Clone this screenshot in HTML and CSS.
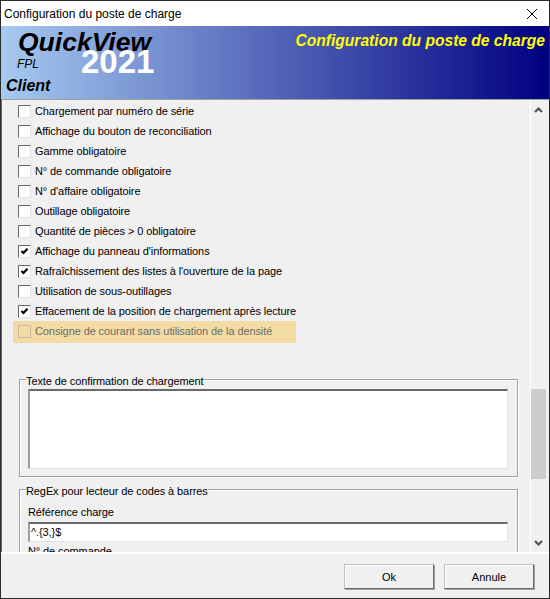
FILE: index.html
```html
<!DOCTYPE html>
<html lang="fr">
<head>
    <meta charset="UTF-8">
    <meta name="viewport" content="width=device-width, initial-scale=1.0">
    <title>Configuration du poste de charge</title>
    <link rel="stylesheet" href="styles.css">
</head>
<body>
    <div class="window">
        <div class="titlebar">
            <span class="title">Configuration du poste de charge</span>
            <svg class="close" width="10" height="10" viewBox="0 0 10 10"><path d="M0 0L10 10M10 0L0 10" stroke="#000" stroke-width="1" fill="none"/></svg>
        </div>
        <div class="banner">
            <span class="brand">QuickView</span>
            <span class="fpl">FPL</span>
            <span class="year">2021</span>
            <span class="client">Client</span>
            <span class="banner-title">Configuration du poste de charge</span>
        </div>
        <div class="content">
            <div class="scroll-area">
                <div class="options">
                    <div class="option"><span class="box"></span>Chargement par numéro de série</div>
                    <div class="option"><span class="box"></span>Affichage du bouton de reconciliation</div>
                    <div class="option"><span class="box"></span>Gamme obligatoire</div>
                    <div class="option"><span class="box"></span>N° de commande obligatoire</div>
                    <div class="option"><span class="box"></span>N° d'affaire obligatoire</div>
                    <div class="option"><span class="box"></span>Outillage obligatoire</div>
                    <div class="option"><span class="box"></span>Quantité de pièces &gt; 0 obligatoire</div>
                    <div class="option"><span class="box"><svg width="11" height="11" viewBox="0 0 11 11"><path d="M2.5 5L4.5 7L8.5 2.8" stroke="#000" stroke-width="2.2" fill="none"/></svg></span>Affichage du panneau d'informations</div>
                    <div class="option"><span class="box"><svg width="11" height="11" viewBox="0 0 11 11"><path d="M2.5 5L4.5 7L8.5 2.8" stroke="#000" stroke-width="2.2" fill="none"/></svg></span>Rafraîchissement des listes à l'ouverture de la page</div>
                    <div class="option"><span class="box"></span>Utilisation de sous-outillages</div>
                    <div class="option"><span class="box"><svg width="11" height="11" viewBox="0 0 11 11"><path d="M2.5 5L4.5 7L8.5 2.8" stroke="#000" stroke-width="2.2" fill="none"/></svg></span>Effacement de la position de chargement après lecture</div>
                    <div class="option option-warn"><span class="box"></span>Consigne de courant sans utilisation de la densité</div>
                </div>
                <div class="group group-confirm">
                    <span class="legend">Texte de confirmation de chargement</span>
                    <div class="field field-area"></div>
                </div>
                <div class="group group-regex">
                    <span class="legend">RegEx pour lecteur de codes à barres</span>
                    <div class="field-label">Référence charge</div>
                    <div class="field field-line">^.{3,}$</div>
                    <div class="field-label">N° de commande</div>
                </div>
            </div>
            <div class="scrollbar">
                <svg class="arrow" width="9" height="6" viewBox="0 0 9 6"><path d="M1 5L4.5 1.5L8 5" stroke="#505050" stroke-width="2" fill="none"/></svg>
                <div class="track"><div class="thumb"></div></div>
                <svg class="arrow" width="9" height="6" viewBox="0 0 9 6"><path d="M1 1L4.5 4.5L8 1" stroke="#505050" stroke-width="2" fill="none"/></svg>
            </div>
        </div>
        <div class="footer">
            <button class="button">Ok</button>
            <button class="button">Annule</button>
        </div>
    </div>
</body>
</html>
```

FILE: styles.css
```css
* {
    box-sizing: border-box;
}
body {
    margin: 0;
    font-family: "Liberation Sans", Arial, sans-serif;
    font-size: 11px;
    color: #000;
    background-color: #f0f0f0;
}
.window {
    width: 550px;
    height: 599px;
    display: flex;
    flex-direction: column;
    border: 1px solid #2b2b2b;
    background-color: #f0f0f0;
    overflow: hidden;
}
.titlebar {
    height: 25px;
    flex: none;
    display: flex;
    align-items: center;
    justify-content: space-between;
    padding: 0 12px 0 3px;
    background-color: #fff;
}
.title {
    font-size: 12px;
}
.banner {
    position: relative;
    height: 73px;
    flex: none;
    background: linear-gradient(to right, #a6caf0, #000080);
    font-style: italic;
    font-weight: bold;
}
.brand {
    position: absolute;
    left: 17px;
    top: 1px;
    font-size: 26.5px;
}
.fpl {
    position: absolute;
    left: 16px;
    top: 31px;
    font-size: 12px;
    font-weight: normal;
}
.year {
    position: absolute;
    left: 80px;
    top: 17px;
    font-size: 33px;
    font-style: normal;
    color: #fff;
}
.client {
    position: absolute;
    left: 5px;
    top: 51px;
    font-size: 16px;
}
.banner-title {
    position: absolute;
    right: 4px;
    top: 6px;
    font-size: 15.6px;
    color: #ff0;
}
.content {
    flex: 1;
    min-height: 0;
    display: flex;
    border-top: 1px solid #a0a0a0;
    border-left: 1px solid #696969;
}
.scroll-area {
    flex: 1;
    min-width: 0;
    overflow: hidden;
    padding: 1px 0 0 11px;
    letter-spacing: -0.1px;
}
.options {
    display: flex;
    flex-direction: column;
}
.option {
    height: 20px;
    width: 283px;
    display: flex;
    align-items: center;
    gap: 4px;
    padding-left: 5px;
    white-space: nowrap;
}
.option-warn {
    height: 22px;
    padding-bottom: 2px;
    background-color: #f3dba4;
    color: #6d6d6d;
}
.box {
    width: 13px;
    height: 13px;
    flex: none;
    display: flex;
    align-items: center;
    justify-content: center;
    border: 1px solid #696969;
    border-right-color: #e3e3e3;
    border-bottom-color: #e3e3e3;
    background-color: #fff;
}
.option-warn .box {
    background-color: #f3dba4;
    border-color: #c8bc9c;
}
.group {
    position: relative;
    width: 499px;
    margin-left: 6px;
    border: 1px solid #a0a0a0;
    box-shadow: inset 1px 1px 0 #fff, 1px 1px 0 #fff;
}
.group-confirm {
    height: 98px;
    margin-top: 36px;
    padding: 9px 8px 0;
}
.group-regex {
    height: 90px;
    margin-top: 12px;
    padding: 15px 8px 0;
}
.legend {
    position: absolute;
    left: 6px;
    top: -5px;
    background-color: #f0f0f0;
}
.field {
    width: 480px;
    background-color: #fff;
    border: 1px solid #e3e3e3;
    border-top: 2px solid #696969;
    border-left: 2px solid #a0a0a0;
}
.field-area {
    height: 80px;
}
.field-line {
    height: 20px;
    padding: 2px 1px;
}
.field-label {
    height: 17px;
    padding-top: 1px;
}
.field-line + .field-label {
    padding-top: 3px;
}
.scrollbar {
    width: 19px;
    flex: none;
    display: flex;
    flex-direction: column;
    align-items: center;
    justify-content: space-between;
    padding: 7px 3px 6px 0;
    border-left: 1px solid #fff;
}
.track {
    flex: 1;
    width: 100%;
    position: relative;
}
.thumb {
    position: absolute;
    left: 0;
    top: 276px;
    width: 15px;
    height: 90px;
    background-color: #cdcdcd;
}
.footer {
    height: 46px;
    flex: none;
    display: flex;
    justify-content: flex-end;
    gap: 10px;
    padding: 10px 15px 0 0;
    border-top: 2px solid #fff;
}
.button {
    width: 90px;
    height: 25px;
    padding: 0;
    font-family: inherit;
    font-size: 11px;
    background-color: #f0f0f0;
    border: 1px solid #c0c0c0;
    border-right-color: #696969;
    border-bottom-color: #696969;
    box-shadow: inset 1px 1px 0 #fff, 1px 1px 0 #a0a0a0;
}
```
